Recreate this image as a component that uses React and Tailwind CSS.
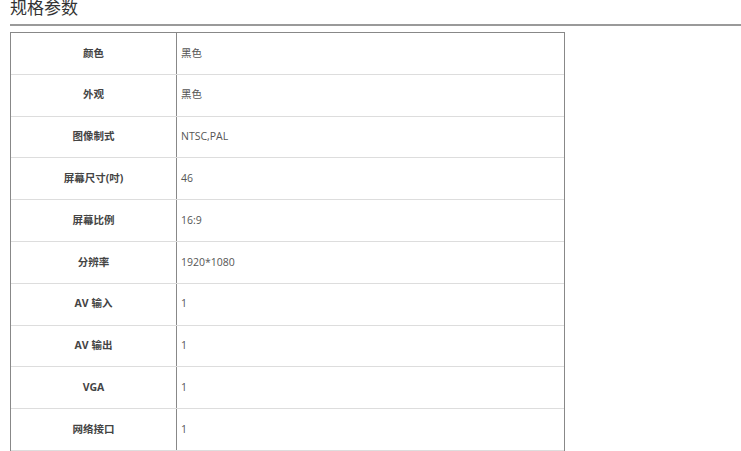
import React from "react";

const rows = [
  ["颜色", "黑色"],
  ["外观", "黑色"],
  ["图像制式", "NTSC,PAL"],
  ["屏幕尺寸(吋)", "46"],
  ["屏幕比例", "16:9"],
  ["分辨率", "1920*1080"],
  ["AV 输入", "1"],
  ["AV 输出", "1"],
  ["VGA", "1"],
  ["网络接口", "1"],
];

export default function App() {
  return (
    <div
      className="bg-white h-[451px] overflow-hidden pl-[10px]"
      style={{ fontFamily: '"Open Sans", "Noto Sans CJK SC", sans-serif' }}
    >
      <h2 className="text-[17px] leading-[16px] text-[#333] pb-[8px] border-b-2 border-[#9a9a9a]">
        规格参数
      </h2>
      <div className="mt-[6px] w-[555px] border border-[#888]">
        {rows.map(([k, v], i) => (
          <div
            key={i}
            className="flex h-[41.8px] border-b border-[#ddd]"
          >
            <div className="w-[166px] shrink-0 border-r border-[#888] flex items-center justify-center text-[10.5px] font-bold text-[#444]">
              {k}
            </div>
            <div className="flex-1 flex items-center pl-[4px] text-[10.5px] text-[#555]">
              {v}
            </div>
          </div>
        ))}
      </div>
    </div>
  );
}
